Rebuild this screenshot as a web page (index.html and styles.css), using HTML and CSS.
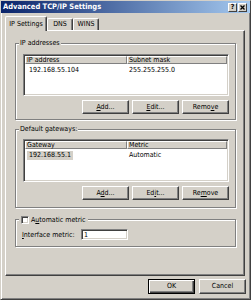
FILE: index.html
```html
<!DOCTYPE html>
<html lang="en">
<head>
    <meta charset="UTF-8">
    <title>Advanced TCP/IP Settings</title>
    <link rel="stylesheet" href="styles.css">
</head>
<body>
    <div class="window">
        <div class="titlebar">
            <span class="title">Advanced TCP/IP Settings</span>
            <span class="cap-btn">?</span>
            <span class="cap-btn close">
                <svg width="5" height="5" viewBox="0 0 5 5"><path d="M0.5 0.5 L4.5 4.5 M4.5 0.5 L0.5 4.5" stroke="#000" stroke-width="1.3"/></svg>
            </span>
        </div>

        <div class="tabs">
            <div class="tab active">IP Settings</div>
            <div class="tab">DNS</div>
            <div class="tab">WINS</div>
        </div>

        <div class="panel">
            <div class="group g-ip">
                <div class="group-title">IP addresses</div>
                <div class="list">
                    <div class="list-head">
                        <div class="col c1">IP address</div>
                        <div class="col c2">Subnet mask</div>
                    </div>
                    <div class="list-row">
                        <div class="cell c1">192.168.55.104</div>
                        <div class="cell c2">255.255.255.0</div>
                    </div>
                </div>
                <div class="btn-row">
                    <button class="btn"><u>A</u>dd...</button>
                    <button class="btn"><u>E</u>dit...</button>
                    <button class="btn">Remo<u>v</u>e</button>
                </div>
            </div>

            <div class="group g-gw">
                <div class="group-title">Default gateways:</div>
                <div class="list">
                    <div class="list-head">
                        <div class="col c1">Gateway</div>
                        <div class="col c2">Metric</div>
                    </div>
                    <div class="list-row">
                        <div class="cell c1 sel-cell"><span class="sel">192.168.55.1</span></div>
                        <div class="cell c2">Automatic</div>
                    </div>
                </div>
                <div class="btn-row">
                    <button class="btn">A<u>d</u>d...</button>
                    <button class="btn">Ed<u>i</u>t...</button>
                    <button class="btn">Re<u>m</u>ove</button>
                </div>
            </div>

            <div class="group g-metric">
                <div class="group-title check-title">
                    <span class="checkbox"></span>
                    <span>A<u>u</u>tomatic metric</span>
                </div>
                <div class="field-row">
                    <label class="field-label"><u>I</u>nterface metric:</label>
                    <input class="field" type="text" value="1">
                </div>
            </div>
        </div>

        <div class="footer">
            <button class="btn btn-big btn-default">OK</button>
            <button class="btn btn-big">Cancel</button>
        </div>
    </div>
</body>
</html>
```

FILE: styles.css
```css
* {
    box-sizing: border-box;
}

body {
    margin: 0;
    font-family: "DejaVu Sans Condensed", "Liberation Sans", sans-serif;
    font-size: 7px;
    color: #000;
    background: #d4d0c8;
}

.window {
    width: 251px;
    height: 300px;
    background: #d4d0c8;
    border: 1px solid;
    border-color: #d4d0c8 #404040 #404040 #d4d0c8;
    box-shadow: inset 1px 1px #fff, inset -1px -1px #808080;
}

/* title bar */
.titlebar {
    height: 12px;
    display: flex;
    align-items: flex-start;
    padding: 0 3px 0 2px;
    background: linear-gradient(to right, #0a246a, #a6caf0);
}

.title {
    flex: 1;
    color: #fff;
    font-weight: bold;
    font-size: 7.5px;
    line-height: 12px;
    white-space: nowrap;
}

.cap-btn {
    width: 9px;
    height: 9px;
    margin-top: 2px;
    display: flex;
    align-items: center;
    justify-content: center;
    background: #d4d0c8;
    border: 1px solid;
    border-color: #fff #404040 #404040 #fff;
    font-weight: bold;
    font-size: 7px;
    line-height: 1;
}

.cap-btn.close {
    margin-left: 1px;
}

/* tabs */
.tabs {
    display: flex;
    align-items: flex-end;
    height: 14px;
    margin: 3px 0 0 4px;
}

.tab {
    width: 26px;
    height: 12px;
    text-align: center;
    line-height: 11px;
    border: 1px solid;
    border-bottom: 0;
    border-color: #fff #404040 #404040 #fff;
    border-radius: 2px 2px 0 0;
    box-shadow: inset -1px 0 #808080;
    background: #d4d0c8;
}

.tab.active {
    width: 42px;
    height: 15px;
    line-height: 14px;
    margin-bottom: -1px;
    position: relative;
    z-index: 1;
}

/* tab page */
.panel {
    width: 240px;
    height: 246px;
    margin-left: 4px;
    padding: 12px 0 0 9px;
    border: 1px solid;
    border-color: #fff #404040 #404040 #fff;
    box-shadow: inset -1px -1px #808080;
}

.group {
    width: 221px;
    padding: 0 0 5px 7px;
    border: 1px solid #808080;
    box-shadow: inset 1px 1px #fff, 1px 1px #fff;
}

.g-gw {
    margin-top: 9px;
    padding-bottom: 7px;
}

.g-gw .list {
    height: 43px;
    margin-top: 5px;
}

.g-metric {
    margin-top: 11px;
    padding-bottom: 6px;
}

.group-title {
    width: fit-content;
    margin: -5px 0 0 -4px;
    padding: 0 1px;
    line-height: 9px;
    background: #d4d0c8;
}

.check-title {
    display: flex;
    align-items: center;
    gap: 2px;
    height: 8px;
    margin-top: -4px;
    line-height: 8px;
    padding: 0 2px;
}

.checkbox {
    width: 8px;
    height: 8px;
    background: #fff;
    border: 1px solid;
    border-color: #808080 #fff #fff #808080;
    box-shadow: inset 1px 1px #404040, inset -1px -1px #d4d0c8;
}

/* list views */
.list {
    width: 206px;
    height: 42px;
    margin-top: 6px;
    padding: 1px;
    background: #fff;
    border: 1px solid;
    border-color: #808080 #fff #fff #808080;
    box-shadow: inset 1px 1px #404040, inset -1px -1px #d4d0c8;
}

.list-head {
    display: flex;
    height: 8px;
}

.col {
    padding-left: 1px;
    line-height: 6px;
    background: #d4d0c8;
    border: 1px solid;
    border-color: #fff #808080 #808080 #fff;
    white-space: nowrap;
}

.col.c1 {
    width: 102px;
}

.col.c2 {
    flex: 1;
}

.list-row {
    display: flex;
    height: 9px;
    margin-top: 2px;
    line-height: 9px;
}

.cell.c1 {
    width: 102px;
    padding-left: 4px;
}

.cell.c2 {
    padding-left: 2px;
}

.cell.sel-cell {
    padding-left: 2px;
}

.sel {
    display: inline-block;
    padding: 0 2px;
    background: #d4d0c8;
}

/* buttons */
.btn-row {
    display: flex;
    justify-content: flex-end;
    gap: 3px;
    width: 206px;
    margin-top: 4px;
}

.btn {
    width: 47px;
    height: 14px;
    padding: 0;
    font: inherit;
    color: #000;
    line-height: 12px;
    background: #d4d0c8;
    border: 1px solid;
    border-color: #fff #404040 #404040 #fff;
    box-shadow: inset -1px -1px #808080;
}

.btn-big {
    height: 15px;
    line-height: 13px;
}

.btn-default {
    border-color: #000;
    box-shadow: inset 1px 1px #fff, inset -1px -1px #404040, inset -2px -2px #808080;
}

/* interface metric */
.field-row {
    display: flex;
    align-items: center;
    margin-top: 5px;
}

.field-label {
    width: 59px;
    margin-left: -1px;
}

.field {
    width: 47px;
    height: 11px;
    padding: 0 0 0 2px;
    font: inherit;
    color: #000;
    background: #fff;
    border: 1px solid;
    border-color: #808080 #fff #fff #808080;
    box-shadow: inset 1px 1px #404040, inset -1px -1px #d4d0c8;
    outline: none;
}

.footer {
    display: flex;
    justify-content: flex-end;
    gap: 4px;
    margin-top: 3px;
    padding-right: 4px;
}
```
